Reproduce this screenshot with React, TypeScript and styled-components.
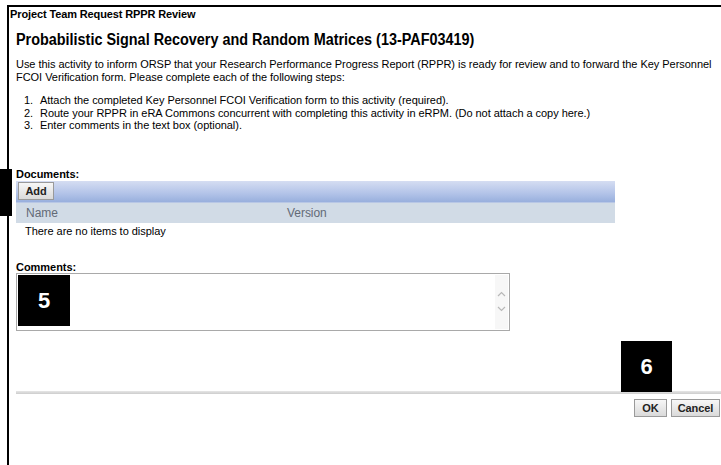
import styled, { createGlobalStyle } from "styled-components";

const GlobalStyle = createGlobalStyle`
  html, body {
    margin: 0;
    padding: 0;
    background: #fff;
  }
  body {
    font-family: "Liberation Sans", Arial, sans-serif;
    font-size: 11px;
    letter-spacing: -0.04px;
    color: #000;
    overflow: hidden;
  }
`;

const Screen = styled.div`
  position: relative;
  width: 721px;
  height: 465px;
  overflow: hidden;
`;

const Frame = styled.div`
  margin: 5px 0 0 7px;
  height: 460px;
  border-top: 2px solid #000;
  border-left: 2px solid #000;
  box-sizing: border-box;
`;

const TitleBar = styled.div`
  font-weight: bold;
  line-height: 14px;
  letter-spacing: -0.12px;
  padding-left: 1px;
`;

const Content = styled.div`
  padding-left: 7px;
`;

// the activity title renders in a narrow bold face
const Heading = styled.h1`
  margin: 9px 0 0;
  font-size: 16px;
  font-weight: bold;
  line-height: 20px;
  letter-spacing: 0;
  white-space: nowrap;
  transform: scaleX(0.9);
  transform-origin: left center;
`;

const Intro = styled.p`
  margin: 8px 0 0;
  line-height: 13px;
  width: 705px;
`;

const Steps = styled.ol`
  margin: 10px 0 0;
  padding-left: 8px;
  list-style: none;
  line-height: 12.5px;
`;

const Step = styled.li`
  display: grid;
  grid-template-columns: 16px 1fr;
`;

const SectionLabel = styled.div<{ gap: number }>`
  margin-top: ${({ gap }) => gap}px;
  font-weight: bold;
  line-height: 12px;
`;

const Grid = styled.div`
  width: 599px;
  margin-top: 1px;
`;

const Toolbar = styled.div`
  height: 22px;
  display: flex;
  align-items: center;
  padding-left: 2px;
  background: linear-gradient(#d5ddf2, #b2c3e8 60%, #98afdd);
  border-bottom: 1px solid #b8c7e5;
  box-sizing: border-box;
`;

const GrayButton = styled.button<{ w: number }>`
  width: ${({ w }) => w}px;
  height: 18px;
  padding: 0;
  font-family: inherit;
  font-size: 11px;
  font-weight: bold;
  letter-spacing: -0.1px;
  color: #222;
  background: linear-gradient(#f7f7f7, #dadada);
  border: 1px solid #9a9a9a;
  border-radius: 0;
`;

const HeaderRow = styled.div`
  display: grid;
  grid-template-columns: 261px 1fr;
  height: 20px;
  align-items: center;
  padding-left: 10px;
  background: #d1dbe6;
  color: #636a76;
  font-size: 12px;
`;

const EmptyRow = styled.div`
  padding: 2px 0 0 9px;
  line-height: 13px;
`;

const CommentBox = styled.div`
  position: relative;
  width: 494px;
  height: 58px;
  border: 1px solid #a9a9a9;
  box-sizing: border-box;
`;

const ScrollStrip = styled.div`
  position: absolute;
  right: 1px;
  top: 1px;
  bottom: 1px;
  width: 13px;
  background: #f7f7f7;
  display: flex;
  flex-direction: column;
  align-items: center;
  justify-content: center;
  gap: 9px;
`;

const Footer = styled.div`
  margin-top: 60px;
  height: 3px;
  background: linear-gradient(#e6e6e6, #cdcdcd);
`;

const FooterButtons = styled.div`
  display: flex;
  justify-content: flex-end;
  gap: 4px;
  margin-top: 5px;
  padding-right: 1px;
`;

// numbered callout boxes laid over the form
const Marker = styled.div<{ x: number; y: number; w: number; h: number }>`
  position: absolute;
  left: ${({ x }) => x}px;
  top: ${({ y }) => y}px;
  width: ${({ w }) => w}px;
  height: ${({ h }) => h}px;
  background: #000;
  color: #fff;
  font-weight: bold;
  font-size: 22px;
  display: flex;
  align-items: center;
  justify-content: center;
`;

const Chevron = ({ up }: { up?: boolean }) => (
  <svg width="9" height="6" viewBox="0 0 9 6">
    <path
      d={up ? "M1 5 L4.5 1.5 L8 5" : "M1 1 L4.5 4.5 L8 1"}
      fill="none"
      stroke="#b8b8b8"
      strokeWidth="1.2"
    />
  </svg>
);

const steps = [
  "Attach the completed Key Personnel FCOI Verification form to this activity (required).",
  "Route your RPPR in eRA Commons concurrent with completing this activity in eRPM. (Do not attach a copy here.)",
  "Enter comments in the text box (optional).",
];

export default function App() {
  return (
    <Screen>
      <GlobalStyle />
      <Frame>
        <TitleBar>Project Team Request RPPR Review</TitleBar>
        <Content>
          <Heading>Probabilistic Signal Recovery and Random Matrices (13-PAF03419)</Heading>
          <Intro>
            Use this activity to inform ORSP that your Research Performance Progress Report (RPPR) is
            ready for review and to forward the Key Personnel FCOI Verification form. Please complete
            each of the following steps:
          </Intro>
          <Steps>
            {steps.map((text, i) => (
              <Step key={i}>
                <span>{i + 1}.</span>
                <span>{text}</span>
              </Step>
            ))}
          </Steps>

          <SectionLabel gap={36}>Documents:</SectionLabel>
          <Grid>
            <Toolbar>
              <GrayButton w={36}>Add</GrayButton>
            </Toolbar>
            <HeaderRow>
              <span>Name</span>
              <span>Version</span>
            </HeaderRow>
            <EmptyRow>There are no items to display</EmptyRow>
          </Grid>

          <SectionLabel gap={23}>Comments:</SectionLabel>
          <CommentBox>
            <ScrollStrip>
              <Chevron up />
              <Chevron />
            </ScrollStrip>
          </CommentBox>

          <Footer />
          <FooterButtons>
            <GrayButton w={33}>OK</GrayButton>
            <GrayButton w={49}>Cancel</GrayButton>
          </FooterButtons>
        </Content>
      </Frame>

      <Marker x={0} y={169} w={12} h={47} />
      <Marker x={18} y={275} w={52} h={51}>5</Marker>
      <Marker x={621} y={341} w={51} h={51}>6</Marker>
    </Screen>
  );
}
